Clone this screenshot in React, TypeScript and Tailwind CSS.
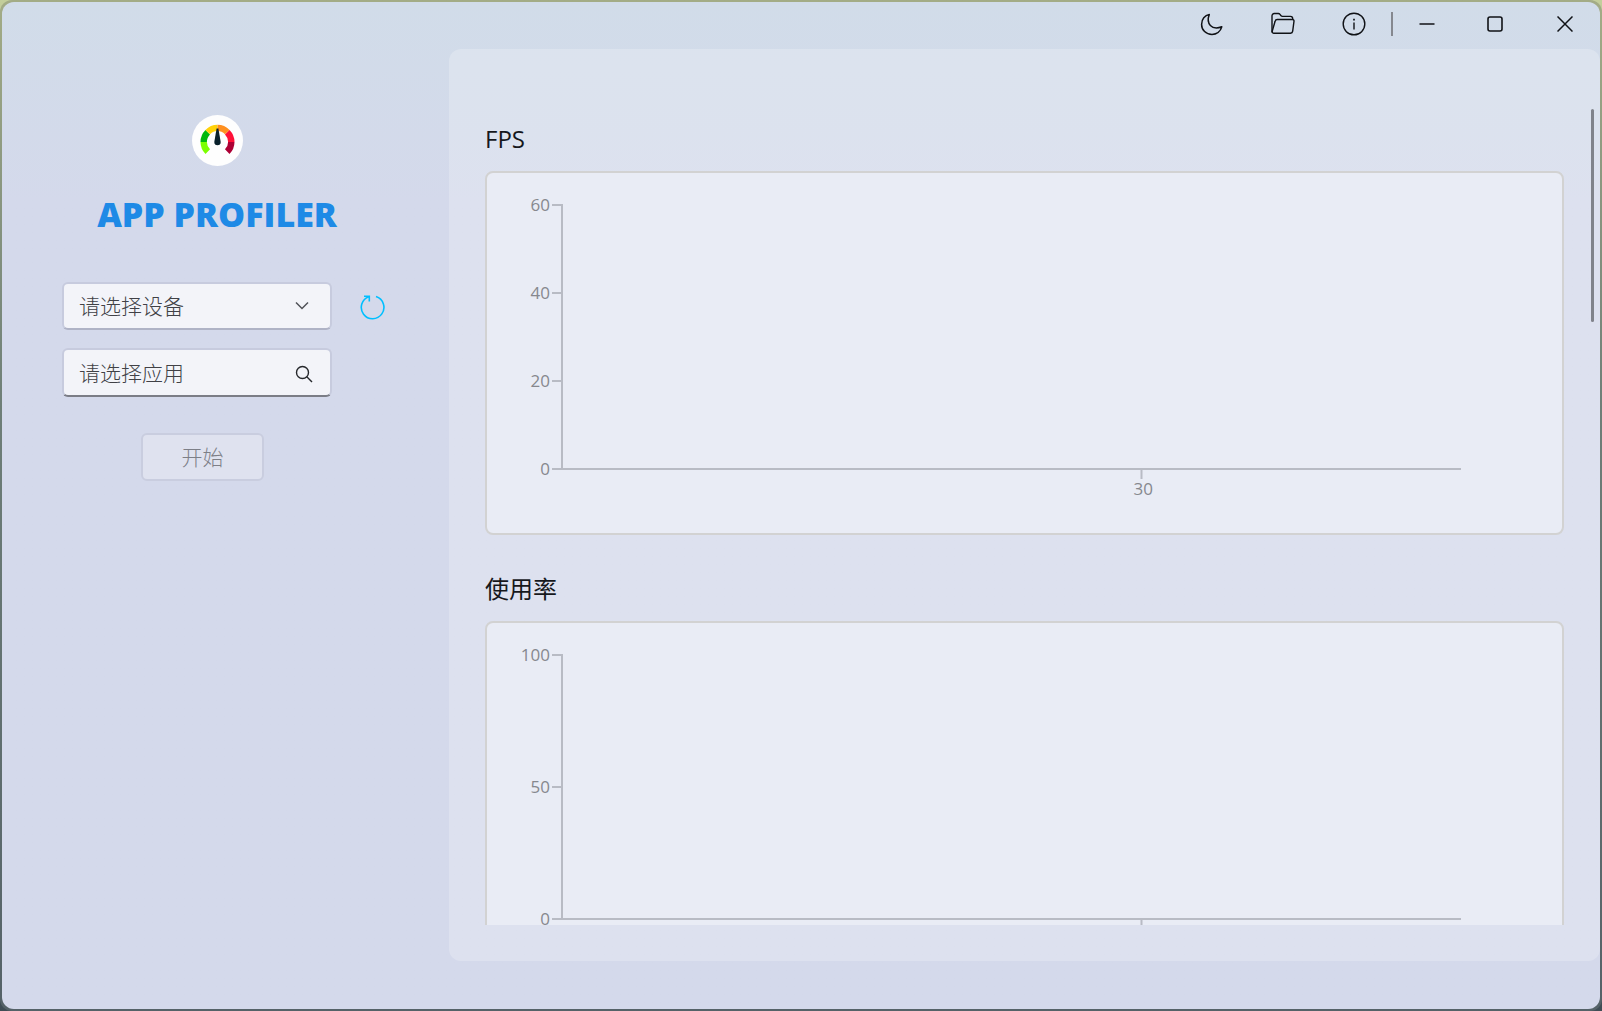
import React from "react";

type ChartProps = { title: string; ticks: number[]; timeLabel?: string };

const PLOT_HEIGHT = 264;

function Chart({ title, ticks, timeLabel }: ChartProps) {
  const top = ticks[0];
  return (
    <section className="mb-[36px]">
      <h2 className="mb-[14px] text-2xl leading-9 font-normal text-[#16181c]">{title}</h2>
      <div className="rounded-lg border-2 border-[#d2d2d2] bg-[#e9ecf5] pt-[32px] pr-[101px] pb-[64px] pl-[74px]">
        <svg
          className="block h-[264px] w-full overflow-visible"
          role="img"
          aria-label={title}
          stroke="#b8bbc4"
          strokeWidth="2"
        >
          <line x1="1" y1="0" x2="1" y2={PLOT_HEIGHT} />
          <line x1="0" y1={PLOT_HEIGHT} x2="100%" y2={PLOT_HEIGHT} />
          {ticks.map((tick) => {
            const y = PLOT_HEIGHT * (1 - tick / top);
            return (
              <g key={tick}>
                <line x1="-9" y1={y} x2="2" y2={y} />
                <text x="-11" y={y + 6} textAnchor="end" fontSize="17" fill="#86888e" stroke="none">
                  {tick}
                </text>
              </g>
            );
          })}
          <line x1="64.5%" y1={PLOT_HEIGHT} x2="64.5%" y2={PLOT_HEIGHT + 10} />
          {timeLabel && (
            <text x="64.7%" y={PLOT_HEIGHT + 26} textAnchor="middle" fontSize="17" fill="#86888e" stroke="none">
              {timeLabel}
            </text>
          )}
        </svg>
      </div>
    </section>
  );
}

function Logo() {
  return (
    <svg className="size-[51px]" viewBox="0 0 51 51" fill="none" aria-hidden="true">
      <circle cx="25.5" cy="25.5" r="25.5" fill="#fefefe" />
      <g strokeWidth="6.4">
        <path d="M15.76 36.64A13.8 13.8 0 0 1 11.7 26.9" stroke="#7bff00" />
        <path d="M11.7 26.9A13.8 13.8 0 0 1 15.74 17.14" stroke="#00b80c" />
        <path d="M15.74 17.14A13.8 13.8 0 0 1 25.5 12.9" stroke="#ffd20a" />
        <path d="M25.5 12.9A13.8 13.8 0 0 1 35.26 17.14" stroke="#ff9020" />
        <path d="M35.26 17.14A13.8 13.8 0 0 1 39.3 26.9" stroke="#ff1038" />
        <path d="M39.3 26.9A13.8 13.8 0 0 1 35.24 36.64" stroke="#ad0035" />
      </g>
      <path d="M24.6 13.6h1.8L28.7 27a3.2 3.2 0 1 1-6.4 0z" fill="#08202b" />
    </svg>
  );
}

function TitleBar() {
  return (
    <header className="flex h-[47px] shrink-0 items-center justify-end pb-1 text-[#101216]">
      <button type="button" aria-label="Dark mode" className="grid h-10 w-[71px] place-items-center">
        <svg className="size-6" viewBox="0 0 24 24" fill="none" stroke="currentColor" strokeWidth="1.5" strokeLinejoin="round">
          <path d="M9.300 2.600C5.800 11.500 11.500 18.600 21.800 14.800C20.500 19.500 16.500 22.400 12 22.400C6 22.400 1.600 18 1.600 12.400C1.600 7.200 4.800 3.300 9.300 2.600Z" />
        </svg>
      </button>
      <button type="button" aria-label="Open folder" className="grid h-10 w-[71px] place-items-center">
        <svg className="size-6" viewBox="0 0 24 24" fill="none" stroke="currentColor" strokeWidth="1.4" strokeLinejoin="round">
          <path d="M1 20.500V3.700A2.200 2.200 0 0 1 3.200 1.500H7.300Q8.300 1.500 9 2.400L10 3.700Q10.500 4.400 11.500 4.400H19.500A2.200 2.200 0 0 1 21.700 6.600V7.500" />
          <path d="M6.300 7.500H21.500A1.500 1.500 0 0 1 23 9.200L21.700 19.200A2.300 2.300 0 0 1 19.500 21.200H2.800A1.700 1.700 0 0 1 1.200 19.200L4.100 9.300A2.300 2.300 0 0 1 6.300 7.500Z" />
        </svg>
      </button>
      <button type="button" aria-label="About" className="grid h-10 w-[71px] place-items-center">
        <svg className="size-6" viewBox="0 0 24 24" fill="none" stroke="currentColor" strokeWidth="1.4">
          <circle cx="12" cy="12" r="10.800" />
          <path d="M12 10.500V17.500" />
          <path d="M12 6.800V8.400" strokeWidth="1.700" />
        </svg>
      </button>
      <span className="ml-0.5 h-6 w-0.5 bg-[#85888f]" />
      <button type="button" aria-label="Minimize" className="grid h-10 w-[67px] place-items-center">
        <svg className="size-4" viewBox="0 0 16 16" stroke="currentColor" strokeWidth="1.6">
          <path d="M0.500 8H15.500" />
        </svg>
      </button>
      <button type="button" aria-label="Maximize" className="grid h-10 w-[69px] place-items-center">
        <svg className="size-4" viewBox="0 0 16 16" fill="none" stroke="currentColor" strokeWidth="1.6">
          <rect x="1" y="1" width="14" height="14" rx="2" />
        </svg>
      </button>
      <button type="button" aria-label="Close" className="grid h-10 w-[71px] place-items-center">
        <svg className="size-4" viewBox="0 0 16 16" stroke="currentColor" strokeWidth="1.5">
          <path d="M0.500 0.500L15.500 15.500M15.500 0.500L0.500 15.500" />
        </svg>
      </button>
    </header>
  );
}

function Sidebar() {
  return (
    <aside className="w-[447px] shrink-0 pt-[66px] pl-[60px]">
      <div className="flex w-[310px] flex-col items-center">
        <Logo />
        <h1 className="mt-[28px] text-[34px] leading-10 font-extrabold whitespace-nowrap text-[#1e8ae6]">
          APP PROFILER
        </h1>
      </div>
      <div className="mt-[48px] flex items-center gap-[28px]">
        <div className="relative w-[270px]">
          <select
            aria-label="设备"
            className="h-12 w-full appearance-none rounded-md border-2 border-[#c7cbde] border-b-[#afb3c6] bg-[#f3f4f9] px-[15px] text-[21px] leading-8 font-light text-[#404146]"
          >
            <option>请选择设备</option>
          </select>
          <svg className="pointer-events-none absolute top-[17px] right-[23px] size-[14px]" viewBox="0 0 14 14" fill="none" stroke="#505258" strokeWidth="1.5" aria-hidden="true">
            <path d="M1 3.500L7 9.500L13 3.500" />
          </svg>
        </div>
        <button type="button" aria-label="Refresh" className="pt-0.5">
          <svg className="size-[26px]" viewBox="0 0 26 26" fill="none" stroke="#00bfff" strokeWidth="1.600">
            <path d="M16 2.600A11.300 11.300 0 1 1 8.900 2.700" />
            <path d="M4 2.200H9.300V7.500" />
          </svg>
        </button>
      </div>
      <div className="relative mt-[18px] w-[270px]">
        <input
          type="text"
          aria-label="应用"
          placeholder="请选择应用"
          className="block h-[49px] w-full rounded-md border-2 border-[#c7cbde] border-b-[#7b7d86] bg-[#f3f4f9] pr-12 pl-[15px] text-[21px] leading-8 font-light placeholder:text-[#404146]"
        />
        <svg className="pointer-events-none absolute top-[17px] right-[19px] size-[18px]" viewBox="0 0 18 18" fill="none" stroke="#26282c" strokeWidth="1.400" aria-hidden="true">
          <circle cx="7.500" cy="7.500" r="6" />
          <path d="M11.800 11.800L17 17" />
        </svg>
      </div>
      <button
        type="button"
        disabled
        className="mt-[36px] ml-[79px] h-12 w-[123px] rounded-md border-2 border-[#c9cddf] bg-[#dfe2ef] text-[21px] leading-8 font-light text-[#7d7f87]"
      >
        开始
      </button>
    </aside>
  );
}

export default function App() {
  return (
    <div className="h-screen bg-linear-to-b from-[#c3ce9b] to-[#3f4d55] font-['Open_Sans','Noto_Sans_CJK_SC',sans-serif]">
      <div className="h-full rounded-xl bg-linear-to-b from-[#a3ac86] via-[#6f7f78] via-40% to-[#556268] p-0.5">
        <div className="flex h-full flex-col overflow-hidden rounded-xl bg-linear-to-b from-[#d1dce9] to-[#d4d9eb] to-20%">
          <TitleBar />
          <div className="flex min-h-0 grow">
            <Sidebar />
            <main className="mb-12 flex min-w-0 grow rounded-xl bg-white/22 pt-[60px] pb-9">
              <div className="min-w-0 grow overflow-hidden pt-3 pl-9">
                <Chart title="FPS" ticks={[60, 40, 20, 0]} timeLabel="30" />
                <Chart title="使用率" ticks={[100, 50, 0]} />
              </div>
              <div className="flex w-[36px] shrink-0 justify-end pr-[6px]">
                <span className="h-[213px] w-[3px] rounded-full bg-[#80838b]" />
              </div>
            </main>
          </div>
        </div>
      </div>
    </div>
  );
}
